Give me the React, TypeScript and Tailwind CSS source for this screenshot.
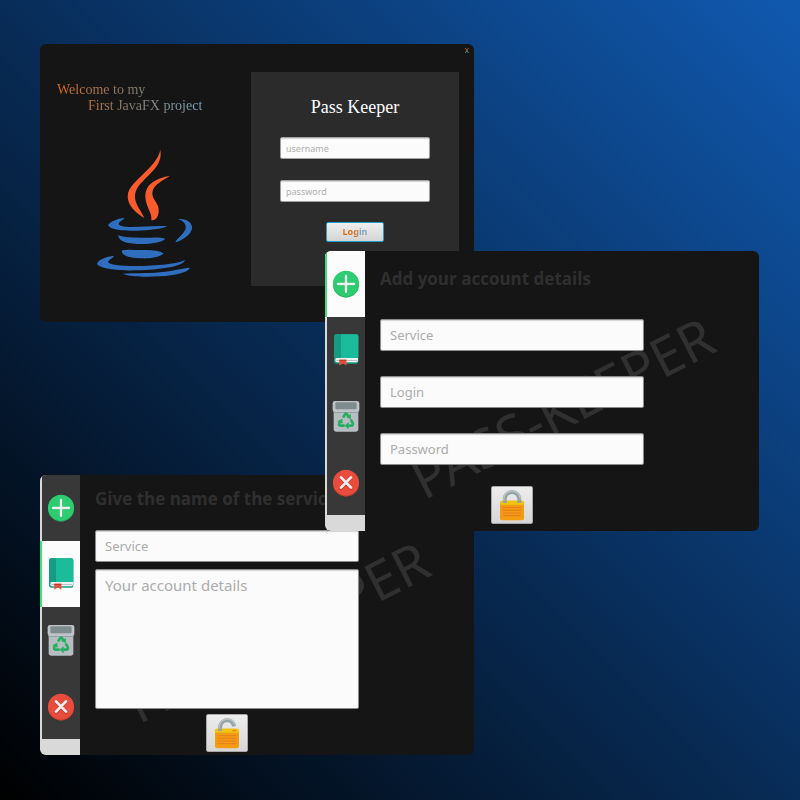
import type { ReactNode } from "react";

function PlusIcon() {
  return (
    <svg width="28" height="28" viewBox="35 75 84 84" aria-hidden="true">
      <circle cx="77" cy="119" r="39" fill="#27ae60" />
      <circle cx="77" cy="116" r="39" fill="#2ecc71" />
      <path d="M77 95v48M53 119h48" stroke="#27ae60" strokeWidth="7" strokeLinecap="round" />
      <path d="M77 93v48M53 117h48" stroke="#ecf0f1" strokeWidth="7" strokeLinecap="round" />
    </svg>
  );
}

function BookIcon() {
  return (
    <svg width="28" height="32" viewBox="35 266 84 96" aria-hidden="true">
      <path d="M48 267h60q6 0 6 6v76q0 6-6 6H48q-7 0-7-8v-72q0-8 7-8z" fill="#16a085" />
      <path d="M46 338h67v9q-2 4-6 4H50q-5 0-5-6z" fill="#ecf0f1" />
      <path d="M46 344h66l-2 3H49z" fill="#bdc3c7" />
      <path d="M62 267h46q6 0 6 6v60q0 5-6 5H62z" fill="#1abc9c" />
      <path d="M48 267h14v71H49q-5 0-8 4v-67q0-8 7-8z" fill="#179b82" />
      <path d="M57 343h21v18l-10-7-11 7z" fill="#e74c3c" />
      <path d="M57 343h21v4H57z" fill="#c0392b" />
    </svg>
  );
}

function BinIcon() {
  return (
    <svg width="28" height="32" viewBox="35 468 84 96" aria-hidden="true">
      <path d="M40 502h74v54q0 7-7 7H47q-7 0-7-7z" fill="#b6bec2" />
      <path d="M40 502h74v5H40z" fill="#95a0a4" />
      <rect x="37" y="471" width="80" height="33" rx="7" fill="#bdc3c7" />
      <rect x="45" y="475" width="64" height="21" rx="4" fill="#7f8c8d" />
      <g fill="none" stroke="#27ae60" strokeWidth="8" strokeLinejoin="round">
        <path d="M68 521l6-10q3-4 6 0l4 6" />
        <path d="M91 526l6 11q3 8-5 8H84" />
        <path d="M73 545H62q-8 0-5-8l4-7" />
      </g>
      <g fill="#27ae60">
        <path d="M92 510l-1 16-14-7z" />
        <path d="M85 534v22l-12-11z" />
        <path d="M51 532l15-8 1 15z" />
      </g>
    </svg>
  );
}

function CloseIcon() {
  return (
    <svg width="28" height="30" viewBox="35 669 84 90" aria-hidden="true">
      <circle cx="77" cy="719" r="39" fill="#c0392b" />
      <circle cx="77" cy="716" r="39" fill="#e74c3c" />
      <path d="M62 703l30 31M92 703l-30 31" stroke="#c0392b" strokeWidth="8" strokeLinecap="round" />
      <path d="M62 700l30 31M92 700l-30 31" stroke="#ecf0f1" strokeWidth="8" strokeLinecap="round" />
    </svg>
  );
}

function LockIcon({ open = false }: { open?: boolean }) {
  return (
    <svg width="28" height="32" viewBox="0 0 84 96" aria-hidden="true">
      {open ? (
        <>
          <path d="M21 43V33C22 16 33 10 43 10C53 10 61 17 63 28" fill="none" stroke="#95a5a6" strokeWidth="12" />
          <path d="M18 38V31C19 13 32 6 43 6C53 6 62 12 66 22" fill="none" stroke="#bdc3c7" strokeWidth="4" />
        </>
      ) : (
        <>
          <path d="M20 42V31a22 22 0 0 1 44 0v11" fill="none" stroke="#95a5a6" strokeWidth="12" />
          <path d="M17 38v-7a25 25 0 0 1 50 0" fill="none" stroke="#bdc3c7" strokeWidth="4" />
        </>
      )}
      <rect x="6" y="35" width="72" height="59" rx="7" fill="#f39c12" />
      <path d="M13 35h58q7 0 7 7v5H6v-5q0-7 7-7z" fill="#f1c40f" />
      {open ? (
        <path d="M58 41h12" stroke="#e67e22" strokeWidth="4" />
      ) : (
        <path d="M58 35h12v7H58z" fill="#95a5a6" />
      )}
      <path d="M15 35h12v7H15z" fill="#95a5a6" />
      <path d="M15 56h54M15 64h54M15 72h54M15 80h54" stroke="#e67e22" strokeWidth="3" strokeLinecap="round" />
    </svg>
  );
}

function JavaLogo() {
  return (
    <svg width="100" height="130" viewBox="45 25 300 390" role="img" aria-label="Java">
      <g fill="#fb5a2c">
        <path d="M241 30C247 62 229 84 207 106C184 129 164 145 165 173C166 195 182 213 193 235C170 220 144 201 143 171C143 142 172 122 198 95C220 72 236 55 241 30Z" />
        <path d="M270 108C250 122 218 134 217 160C216 182 239 190 236 216C234 232 229 241 214 242C218 220 197 202 196 171C196 130 231 116 270 108Z" />
      </g>
      <g fill="#2f6ebf">
        <path d="M134 234C110 236 88 248 84 257C94 272 130 274 168 273C210 272 245 268 262 260C230 257 190 262 155 262C130 262 112 258 117 250C120 244 130 241 134 234Z" />
        <path d="M294 238C325 235 338 252 336 267C332 285 308 302 286 308C292 294 313 283 317 266C319 252 309 243 294 238Z" />
        <path d="M115 286C130 294 160 294 190 294C215 294 240 291 256 297C246 308 215 313 184 313C150 313 114 308 115 286Z" />
        <path d="M126 332C145 328 160 332 188 331C215 330 235 332 251 341C240 353 210 357 186 356C155 355 122 350 126 332Z" />
        <path d="M102 348C78 350 52 362 51 373C60 388 120 394 172 392C235 390 310 382 315 361C300 370 245 378 180 379C130 380 88 376 84 368C84 360 100 356 102 348Z" />
        <path d="M128 402C160 400 200 402 240 398C280 394 305 386 330 384C325 398 285 407 240 410C200 412 150 412 128 402Z" />
      </g>
    </svg>
  );
}

const sections = [
  { name: "Add account", icon: <PlusIcon /> },
  { name: "Find account", icon: <BookIcon /> },
  { name: "Delete account", icon: <BinIcon /> },
  { name: "Close", icon: <CloseIcon /> },
];

function Sidebar({ active }: { active: number }) {
  return (
    <nav className="w-10 shrink-0 bg-[#d9d9d9]">
      {sections.map((section, i) => (
        <button
          key={section.name}
          type="button"
          aria-label={section.name}
          className={
            i === active
              ? "flex h-[66px] w-full items-center justify-center border-l-2 border-[#3fdc80] bg-[#fcfcfc]"
              : "flex h-[66px] w-full items-center justify-center border-l-2 border-[#d9d9d9] bg-[#383838]"
          }
        >
          {section.icon}
        </button>
      ))}
    </nav>
  );
}

function KeeperWindow({ active, children }: { active: number; children: ReactNode }) {
  return (
    <div className="relative flex h-[280px] w-[434px] overflow-hidden rounded-md bg-[#151515]">
      <div
        aria-hidden="true"
        className="absolute top-[129px] left-[237px] -translate-x-1/2 -rotate-27 text-[54px] leading-none whitespace-nowrap text-[#303030]"
      >
        PASS-KEEPER
      </div>
      <Sidebar active={active} />
      <div className="relative ml-[15px] flex w-[264px] flex-col items-center">{children}</div>
    </div>
  );
}

const titleClass =
  "w-full font-['Open_Sans','Noto_Sans',sans-serif] text-[17px] leading-6 font-bold whitespace-nowrap text-[#2f2f2f]";

const fieldClass =
  "w-full shrink-0 resize-none rounded-xs border border-[#8c8c8c] bg-[#fbfbfb] px-[9px] text-[#333] shadow-[inset_0_1px_1px_#d4d4d4] placeholder:text-[#acacac]";

const lockButtonClass =
  "flex h-[38px] w-[42px] shrink-0 items-center justify-center rounded-xs border border-[#a8a8a8] bg-linear-to-b from-[#ededed] to-[#d6d6d6]";

const loginFieldClass =
  "h-[22px] w-[150px] rounded-xs border border-[#a0a0a0] bg-[#fbfbfb] px-[5px] text-[9px] text-[#333] shadow-[inset_0_1px_1px_#d4d4d4] placeholder:text-[#b0b0b0]";

function LoginWindow() {
  return (
    <div className="relative flex h-[278px] w-[434px] justify-between overflow-hidden rounded-md bg-[#151515] pr-[15px] pl-[17px]">
      <div className="pt-[38px]">
        <h1 className="bg-linear-to-r from-[#d9690f] via-[#85796b] to-[#7ea8c2] bg-clip-text font-['Liberation_Serif',serif] text-sm leading-4 text-transparent">
          <span className="block">Welcome to my</span>
          <span className="block pl-[31px]">First JavaFX project</span>
        </h1>
        <div className="mt-[34px] pl-[38px]">
          <JavaLogo />
        </div>
      </div>
      <form className="mt-7 flex h-[214px] w-[208px] flex-col items-center bg-[#2b2b2b] pt-[25px]">
        <h2 className="font-['Liberation_Serif',serif] text-lg leading-5 text-white">Pass Keeper</h2>
        <input aria-label="username" placeholder="username" className={`${loginFieldClass} mt-5`} />
        <input aria-label="password" type="password" placeholder="password" className={`${loginFieldClass} mt-[21px]`} />
        <button
          type="button"
          className="mt-5 h-5 w-[58px] rounded-xs border border-[#1fa0cc] bg-linear-to-b from-[#efefef] to-[#d4d4d4] text-[9px] leading-4 font-bold"
        >
          <span className="bg-linear-to-r from-[#dd6a0c] from-50% to-[#7f9fb8] to-70% bg-clip-text text-transparent">Login</span>
        </button>
      </form>
      <button type="button" aria-label="Close window" className="absolute top-0 right-[5px] text-[8px] leading-3">
        <span className="bg-linear-to-b from-[#dd6a0c] from-50% to-[#7ea8c2] to-70% bg-clip-text text-transparent">x</span>
      </button>
    </div>
  );
}

export default function App() {
  return (
    <main className="relative min-h-screen overflow-hidden bg-linear-[to_top_right,#000000,#1059b0] font-['Noto_Sans','Open_Sans',sans-serif]">
      <section className="absolute top-11 left-10">
        <LoginWindow />
      </section>

      <section className="absolute top-[475px] left-10">
        <KeeperWindow active={1}>
          <h2 className={`${titleClass} mt-3`}>Give the name of the service</h2>
          <input aria-label="Service" placeholder="Service" className={`${fieldClass} mt-[19px] h-8 text-[13px]`} />
          <textarea
            aria-label="Your account details"
            placeholder="Your account details"
            className={`${fieldClass} mt-[7px] h-[140px] py-[5px] text-[15px] leading-5`}
          />
          <button type="button" aria-label="Unlock" className={`${lockButtonClass} mt-[5px]`}>
            <LockIcon open />
          </button>
        </KeeperWindow>
      </section>

      <section className="absolute top-[251px] left-[325px]">
        <KeeperWindow active={0}>
          <h2 className={`${titleClass} mt-4`}>Add your account details</h2>
          <div className="mt-7 flex w-full flex-col gap-[25px]">
            <input aria-label="Service" placeholder="Service" className={`${fieldClass} h-8 text-[13px]`} />
            <input aria-label="Login" placeholder="Login" className={`${fieldClass} h-8 text-[13px]`} />
            <input aria-label="Password" type="password" placeholder="Password" className={`${fieldClass} h-8 text-[13px]`} />
          </div>
          <button type="button" aria-label="Save" className={`${lockButtonClass} mt-[21px]`}>
            <LockIcon />
          </button>
        </KeeperWindow>
      </section>
    </main>
  );
}
